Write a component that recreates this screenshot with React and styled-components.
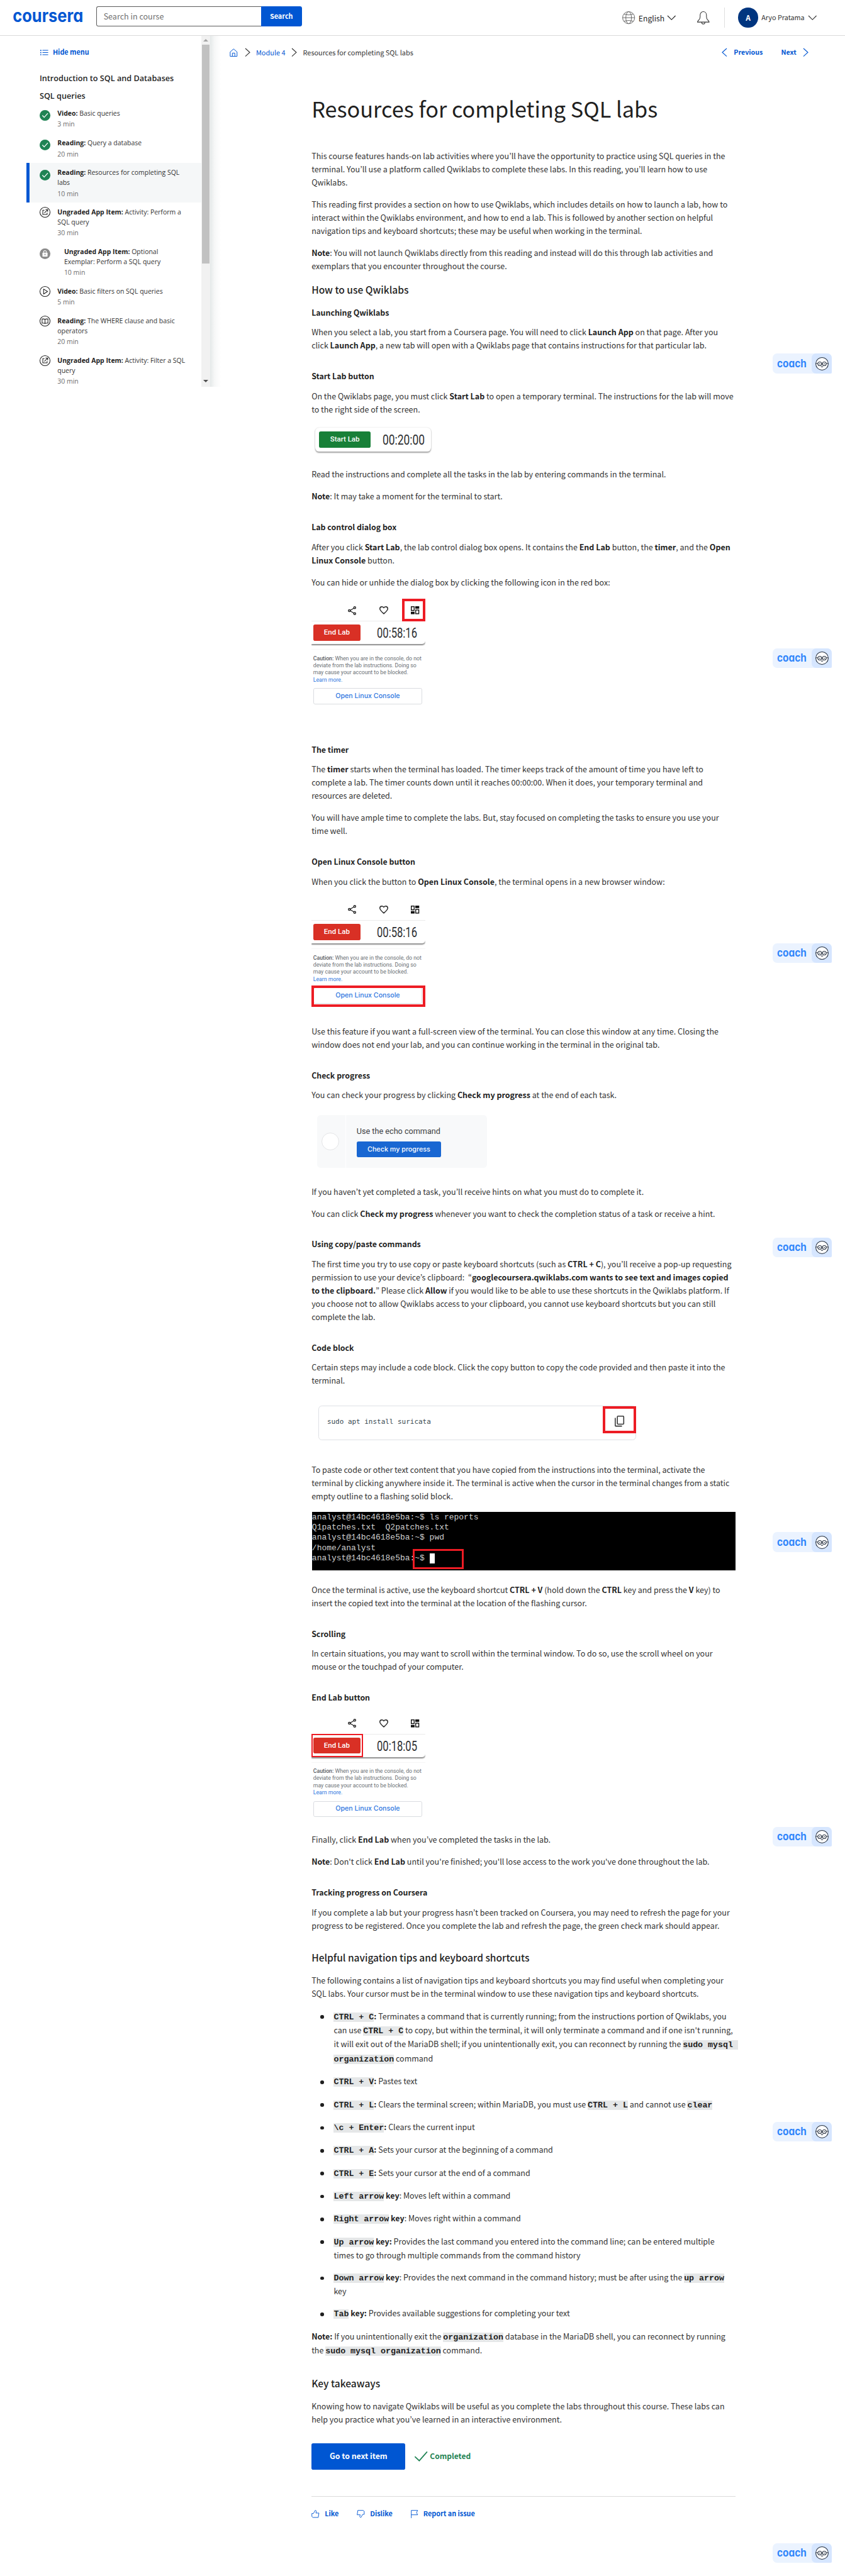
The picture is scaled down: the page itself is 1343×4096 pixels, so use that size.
import React from 'react';
import styled, { createGlobalStyle, css } from 'styled-components';

/* Design units to screen pixels. */
const SCALE = 0.6994;
const u = (n) => `${+(n * SCALE).toFixed(3)}px`;

const SANS = '"Noto Sans CJK KR", "Noto Sans CJK SC", "Open Sans", sans-serif';
const OPEN = '"Open Sans", "Noto Sans", sans-serif';
const MONO = '"Liberation Mono", monospace';
const BLUE = '#0056d2';
const INK = '#1f1f1f';
const BODY_INK = '#333';
const RED = '#ed1c24';

const GlobalStyle = createGlobalStyle`
  *, *::before, *::after { box-sizing: border-box; }
  body { margin: 0; background: #fff; color: ${INK}; font-family: ${SANS}; }
  svg { display: block; flex: none; overflow: visible; }
`;

const Page = styled.div`
  position: relative;
  height: 4096px;
  overflow: hidden;
  white-space: nowrap;
`;

/* ---------- header ---------- */
const Header = styled.header`
  display: flex;
  align-items: center;
  height: ${u(81)};
  padding: 0 ${u(65)} 0 ${u(30)};
  border-bottom: 1px solid #dadada;
`;
const Logo = styled.div`
  width: ${u(189)};
`;
const SearchForm = styled.div`
  display: flex;
  width: ${u(467)};
  height: ${u(46)};
  margin-top: ${u(-5)};
`;
const SearchField = styled.div`
  flex: 1;
  display: flex;
  align-items: center;
  padding: 0 ${u(15)} ${u(1)};
  border: 1px solid #5b5b5b;
  border-right: 0;
  border-radius: ${u(5)} 0 0 ${u(5)};
  color: #707070;
  font-size: ${u(17.96)};
`;
const SearchButton = styled.div`
  display: flex;
  align-items: center;
  justify-content: center;
  width: ${u(93)};
  padding-bottom: ${u(3)};
  border-radius: 0 ${u(5)} ${u(5)} 0;
  background: ${BLUE};
  color: #fff;
  font-size: ${u(15.56)};
  font-weight: 700;
`;
const HeaderTools = styled.div`
  display: flex;
  align-items: center;
  margin-left: auto;
  height: 100%;
`;
const Language = styled.div`
  display: flex;
  align-items: center;
  gap: ${u(7.5)};
  margin: ${u(2)} ${u(49)} 0 0;
  font-size: ${u(17.4)};
  font-weight: 400;
`;
const Bell = styled.div`
  margin-top: ${u(3)};
`;
const Rule = styled.div`
  width: ${u(2)};
  height: ${u(45)};
  margin: 0 ${u(30)} 0 ${u(33)};
  background: #dedede;
`;
const Account = styled.div`
  display: flex;
  align-items: center;
  font-size: ${u(15.5)};
  color: ${BODY_INK};
  > svg { margin-top: ${u(2)}; }
`;
const AccountName = styled.span`
  margin: 0 ${u(9)} ${u(2.5)} ${u(8)};
`;
const Avatar = styled.div`
  display: flex;
  align-items: center;
  justify-content: center;
  width: ${u(45)};
  height: ${u(45)};
  border-radius: 50%;
  background: #00357f;
  color: #fff;
  font-size: ${u(17)};
  font-weight: 700;
`;

/* ---------- body frame ---------- */
const Body = styled.div`
  display: flex;
  align-items: flex-start;
`;
const Sidebar = styled.aside`
  display: flex;
  flex: none;
  width: ${u(502)};
  height: ${u(798)};
  padding-left: ${u(60)};
  overflow: hidden;
`;
const SideContent = styled.div`
  flex: none;
  width: ${u(397)};
`;
const ScrollTrack = styled.div`
  display: flex;
  flex-direction: column;
  align-items: center;
  flex: none;
  width: ${u(21)};
  padding: ${u(8)} 0 ${u(9)};
  background: #f1f1f1;
`;
const ScrollThumb = styled.div`
  width: ${u(17)};
  height: ${u(497)};
  margin: ${u(7)} 0 auto;
  background: #c1c1c1;
`;
const Arrow = styled.div`
  border: ${u(5.8)} solid transparent;
  ${(p) => (p.$down
    ? css`border-top-color: #505050; border-bottom: 0;`
    : css`border-bottom-color: #a3a3a3; border-top: 0;`)}
`;
const Shade = styled.div`
  flex: 1;
  background: linear-gradient(to right, #e4e8e8, #f6f7f7 40%, #fff);
`;
const HideMenu = styled.div`
  display: flex;
  align-items: center;
  gap: ${u(11)};
  height: ${u(30)};
  margin: ${u(22)} 0 0 ${u(31)};
  color: ${BLUE};
  font-size: ${u(15.5)};
  font-weight: 700;
  > svg { margin-top: ${u(3)}; }
  > span { margin-top: ${u(-2.5)}; }
`;
const SideHeading = styled.div`
  margin: ${(p) => u(p.$top)} 0 0 ${u(30)};
  font: 600 ${u(18.12)} / ${u(30)} ${OPEN};
`;
const ItemList = styled.div`
  margin-top: ${u(1.8)};
`;
const Item = styled.div`
  display: flex;
  align-items: flex-start;
  padding: ${u(10)} 0 ${u(10)} ${u(30.3)};
  ${(p) => p.$active && css`
    background: #f5f7f8;
    box-shadow: inset ${u(7)} 0 0 ${BLUE};
  `}
`;
const ItemIcon = styled.div`
  margin: ${(p) => u(p.$drop ? 5.7 : 1.2)} ${(p) => u(p.$indent ? 31 : 15.8)} 0 0;
`;
const ItemText = styled.div`
  margin: ${u(2.4)} 0 ${u(-2.4)};
  font: 400 ${u(14.97)} / ${u(22.5)} ${OPEN};
  color: ${BODY_INK};
  b { font-weight: 700; color: ${INK}; }
`;
const Minutes = styled.div`
  margin-top: ${u(2.5)};
  color: #6e6e6e;
`;

/* ---------- main column ---------- */
const Main = styled.main`
  flex: 1;
`;
const NavRow = styled.nav`
  display: flex;
  align-items: center;
  height: ${u(30)};
  margin: ${u(22)} ${u(84)} 0 ${u(20)};
  font-size: ${u(15.64)};
  svg { margin-top: ${u(2)}; }
`;
const HomeLink = styled.div`
  margin-right: ${u(18)};
`;
const CrumbLink = styled.span`
  margin: 0 ${u(15)} 0 ${u(14)};
  color: ${BLUE};
`;
const CrumbHere = styled.span`
  margin-left: ${u(15)};
  color: ${BODY_INK};
`;
const Pager = styled.div`
  display: flex;
  align-items: center;
  gap: ${u(16.5)};
  margin-left: auto;
  color: ${BLUE};
  font-size: ${u(15.33)};
  font-weight: 700;
`;
const PagerNext = styled.span`
  margin-left: ${u(25)};
`;
const Article = styled.article`
  display: flex;
  flex-direction: column;
  align-items: stretch;
  width: ${u(964)};
  margin: ${u(83.5)} 0 0 ${u(206)};
  font-size: ${u(17.9)};
`;
const Title = styled.h1`
  margin: 0;
  font-size: ${u(49)};
  font-weight: 400;
  line-height: ${u(61)};
`;
const H3 = styled.h3`
  margin: ${(p) => u(p.$top)} 0 0;
  font-size: ${u(22.2)};
  font-weight: 500;
  line-height: ${u(30)};
`;
const H4 = styled.h4`
  margin: ${(p) => u(p.$top ?? 40)} 0 0;
  font-size: ${u(17.7)};
  font-weight: 700;
  line-height: ${u(30)};
`;
const P = styled.p`
  margin: ${(p) => u(p.$top ?? 20)} 0 0;
  line-height: ${(p) => u(p.$line ?? 30)};
  color: ${BODY_INK};
  b { color: ${INK}; }
  ${H4} + & { margin-top: ${u(15)}; }
`;
const Code = styled.code`
  background: #e5e7e8;
  color: ${INK};
  font: 700 ${u(19.02)} / 1 ${MONO};
`;
const List = styled.ul`
  margin: ${u(19)} 0 0;
  padding: 0;
  list-style: none;
`;
const Li = styled.li`
  display: flex;
  align-items: flex-start;
  margin-top: ${(p) => u(p.$top ?? 20)};
  line-height: ${u(32)};
  color: ${BODY_INK};
  b { color: ${INK}; }
  &::before {
    content: '';
    flex: none;
    width: ${u(8)};
    height: ${u(8)};
    margin: ${u(14)} ${u(22.5)} 0 ${u(20)};
    border-radius: 50%;
    background: ${INK};
  }
  &:first-child { margin-top: 0; }
`;

/* ---------- illustrations ---------- */
const StartCard = styled.div`
  display: flex;
  align-items: center;
  justify-content: space-between;
  width: ${u(263)};
  height: ${u(54)};
  margin: ${u(26)} 0 0 ${u(9)};
  padding: 0 ${u(15)} 0 ${u(8.5)};
  border-radius: ${u(9)};
  box-shadow: 0 ${u(2.5)} ${u(3)} rgba(0, 0, 0, 0.35), 0 0 ${u(3)} rgba(0, 0, 0, 0.1);
`;
const LabButton = styled.div`
  display: flex;
  align-items: center;
  justify-content: center;
  width: ${(p) => u(p.$width)};
  height: ${u(37)};
  border-radius: ${u(4)};
  background: ${(p) => p.$color};
  color: #fff;
  font: 500 ${u(16.4)} / 1 Roboto, sans-serif;
`;
const Panel = styled.div`
  position: relative;
  width: ${u(259)};
  height: ${u(258)};
  margin-top: ${(p) => u(p.$top)};
  overflow: hidden;
`;
const PanelIcons = styled.div`
  display: flex;
  align-items: center;
  justify-content: flex-end;
  gap: ${u(52.5)};
  height: ${u(51.5)};
  padding: ${u(2.5)} ${u(14)} 0 0;
  border-bottom: 1px solid #efefef;
`;
const PanelTimer = styled.div`
  display: flex;
  align-items: center;
  justify-content: space-between;
  height: ${u(51.5)};
  padding: 0 ${u(19.5)} 0 ${u(3.7)};
  border-radius: 0 0 ${u(7)} 0;
  box-shadow: 0 ${u(2)} ${u(2.5)} rgba(0, 0, 0, 0.45);
`;
const Caution = styled.div`
  margin-top: ${u(11.5)};
  padding: ${u(12)} 0 0 ${u(3.7)};
  border-top: 1px solid #f6f6f6;
  color: #6a6f74;
  font: 400 ${u(12.5)} / ${u(16.2)} Roboto, sans-serif;
  b { font-weight: 500; color: #55595e; }
`;
const LearnMore = styled.div`
  color: #2b76e0;
`;
const ConsoleButton = styled.div`
  display: flex;
  align-items: center;
  justify-content: center;
  width: ${u(248)};
  height: ${u(36.5)};
  margin: ${u(10.5)} 0 0 ${u(3.7)};
  border: 1px solid #dadce0;
  border-radius: ${u(4)};
  color: #2e77e0;
  font: 500 ${u(15.25)} / 1 Inter, sans-serif;
`;
const Mark = styled.div`
  position: absolute;
  left: ${(p) => u(p.$x)};
  top: ${(p) => u(p.$y)};
  width: ${(p) => u(p.$w)};
  height: ${(p) => u(p.$h)};
  border: ${(p) => u(p.$line ?? 6)} solid ${RED};
`;
const ProgressCard = styled.div`
  display: flex;
  width: ${u(385)};
  height: ${u(120.7)};
  margin: ${u(29)} 0 0 ${u(13)};
  border-radius: ${u(8)};
  background: #f8f9fa;
`;
const ProgressMark = styled.div`
  display: flex;
  align-items: center;
  justify-content: center;
  width: ${u(65)};
  padding-right: ${u(4)};
  border-right: 1px solid #fff;
`;
const Circle = styled.div`
  width: ${u(40)};
  height: ${u(40)};
  border: 1px solid #e4e5e7;
  border-radius: 50%;
  background: #fff;
`;
const ProgressBody = styled.div`
  padding: ${u(27)} 0 0 ${u(24.5)};
  color: #3c4043;
  font: 400 ${u(18.1)} / ${u(24)} Roboto, sans-serif;
`;
const ProgressButton = styled.div`
  width: ${u(192)};
  height: ${u(36.5)};
  margin-top: ${u(9.5)};
  border-radius: ${u(4)};
  background: #1967d2;
  color: #fff;
  text-align: center;
  font: 500 ${u(15.4)} / ${u(36)} Inter, sans-serif;
`;
const CodeBox = styled.div`
  position: relative;
  display: flex;
  align-items: center;
  justify-content: space-between;
  width: ${u(721)};
  height: ${u(79)};
  margin: ${u(40.5)} 0 0 ${u(16)};
  padding: 0 ${u(25)} ${u(1)} ${u(18)};
  border: 1px solid #dfe1e5;
  border-radius: ${u(8)};
  color: #37474f;
  font: 400 ${u(15.68)} / 1 "DejaVu Sans Mono", monospace;
`;
const CopyIconSlot = styled.div`
  margin-bottom: ${u(7)};
`;
const Terminal = styled.pre`
  position: relative;
  height: ${u(133)};
  margin: ${u(19.5)} 0 0 ${u(1)};
  padding: ${u(1.5)} 0 0;
  background: #000;
  color: #cfcfcf;
  font: 400 ${u(18.55)} / ${u(23.3)} ${MONO};
`;
const Cursor = styled.span`
  display: inline-block;
  width: ${u(12)};
  height: ${u(23)};
  background: #fff;
  vertical-align: middle;
`;

/* ---------- footer of the article ---------- */
const Actions = styled.div`
  display: flex;
  align-items: center;
  margin-top: ${u(39)};
`;
const NextButton = styled.div`
  width: ${u(213.5)};
  height: ${u(60)};
  margin-right: ${u(20.5)};
  border-radius: ${u(4)};
  background: ${BLUE};
  color: #fff;
  text-align: center;
  font-size: ${u(17.6)};
  font-weight: 700;
  line-height: ${u(58)};
`;
const Completed = styled.span`
  margin: 0 0 ${u(5)} ${u(6)};
  color: #1f8354;
  font-size: ${u(17.2)};
  font-weight: 700;
`;
const Feedback = styled.div`
  display: flex;
  gap: ${u(41.5)};
  margin-top: ${u(60)};
  padding-top: ${u(25)};
  border-top: 1px solid #dcdcdc;
  color: ${BLUE};
  font-size: ${u(15.5)};
  font-weight: 700;
  line-height: ${u(30)};
`;
const FeedbackItem = styled.div`
  display: flex;
  align-items: center;
  gap: ${u(12)};
  span { margin-top: ${u(-2)}; }
`;

/* ---------- coach badge ---------- */
const CoachBadge = styled.div`
  position: absolute;
  left: ${u(1756)};
  top: ${(p) => u(p.$y)};
  display: flex;
  align-items: center;
  width: ${u(134)};
  height: ${u(45)};
  padding-left: ${u(10.5)};
  border-radius: ${u(10)} ${u(10)} ${u(3)} ${u(10)};
  background: #ebf3ff;
`;
const CoachFace = styled.div`
  display: flex;
  align-items: center;
  justify-content: center;
  width: ${u(45)};
  height: 100%;
  margin-left: auto;
  border-radius: ${u(10)} ${u(10)} ${u(3)} ${u(10)};
  background: #d6e6ff;
`;
const Wordmark = styled.text`
  font-family: Inter, sans-serif;
  font-weight: ${(p) => p.$weight ?? 700};
  font-feature-settings: 'cv11';
`;
const TimerText = styled.text`
  font-family: Roboto, sans-serif;
  font-weight: 400;
`;

function Svg({ w, h, stroke = 'currentColor', sw = 1.5, fill = 'none', children }) {
  return (
    <svg width={w * SCALE} height={h * SCALE} viewBox={`0 0 ${w} ${h}`} fill={fill} stroke={stroke} strokeWidth={sw}>
      {children}
    </svg>
  );
}

const Chevron = ({ dir, w = 10, h = 18, sw = 1.6, color }) => (
  <Svg w={w} h={h} sw={sw} stroke={color}>
    {dir === 'down' && <path d={`M0 0 L${w / 2} ${h} L${w} 0`} />}
    {dir === 'right' && <path d={`M0 0 L${w} ${h / 2} L0 ${h}`} />}
    {dir === 'left' && <path d={`M${w} 0 L0 ${h / 2} L${w} ${h}`} />}
  </Svg>
);

const Timer = ({ value, width = 91.5 }) => (
  <Svg w={width} h={23} stroke="none" fill="#2b2d30">
    <TimerText x="0" y="22.5" fontSize="31" textLength={width} lengthAdjust="spacingAndGlyphs">{value}</TimerText>
  </Svg>
);

const DoneIcon = () => (
  <Svg w={24.4} h={24.4} sw={1.8} stroke="#fff">
    <circle cx="12.2" cy="12.2" r="12.2" fill="#1f8354" stroke="none" />
    <path d="M6.3 12.2 L10.3 16.6 L18.6 7.4" />
  </Svg>
);
const RingIcon = ({ children }) => (
  <Svg w={24.4} h={24.4} sw={1.5} stroke={INK}>
    <circle cx="12.2" cy="12.2" r="11.5" />
    {children}
  </Svg>
);
const icons = {
  done: <DoneIcon />,
  app: (
    <RingIcon>
      <path d="M11 7.4H7.2V17.2H17V13.4M13.3 6.2H18.2V11.1M18.2 6.2L10.8 13.6" />
    </RingIcon>
  ),
  video: (
    <RingIcon>
      <path d="M9 6.6L18 12.2L9 17.8Z" strokeLinejoin="round" />
    </RingIcon>
  ),
  reading: (
    <RingIcon>
      <path d="M12.2 8.3C11 7.4 8.5 7.2 5.6 7.4V16.8C8.5 16.6 11 16.8 12.2 17.8C13.4 16.8 15.9 16.6 18.8 16.8V7.4C15.9 7.2 13.4 7.4 12.2 8.3V17.6" />
    </RingIcon>
  ),
  lock: (
    <Svg w={24.4} h={24.4} stroke="none">
      <circle cx="12.2" cy="12.2" r="12.2" fill="#8c8c8c" />
      <rect x="6.4" y="9.6" width="11.6" height="9" rx="1" fill="#fff" />
      <path d="M9 9.8V8.2A3.2 3.2 0 0 1 15.4 8.2V9.8" stroke="#fff" strokeWidth="1.5" />
      <path d="M12.2 12V16M10.8 13.4H13.6" stroke="#8c8c8c" strokeWidth="1.2" />
    </Svg>
  ),
};

const items = [
  { kind: 'Video', icon: 'done', lines: ['Basic queries'], min: 3 },
  { kind: 'Reading', icon: 'done', lines: ['Query a database'], min: 20 },
  { kind: 'Reading', icon: 'done', lines: ['Resources for completing SQL', 'labs'], min: 10, active: true },
  { kind: 'Ungraded App Item', icon: 'app', lines: ['Activity: Perform a', 'SQL query'], min: 30 },
  { kind: 'Ungraded App Item', icon: 'lock', lines: ['Optional', 'Exemplar: Perform a SQL query'], min: 10, indent: true },
  { kind: 'Video', icon: 'video', lines: ['Basic filters on SQL queries'], min: 5 },
  { kind: 'Reading', icon: 'reading', lines: ['The WHERE clause and basic', 'operators'], min: 20 },
  { kind: 'Ungraded App Item', icon: 'app', lines: ['Activity: Filter a SQL', 'query'], min: 30 },
];

function SideItem({ item }) {
  return (
    <Item $active={item.active}>
      <ItemIcon $drop={item.icon === 'done' || item.icon === 'lock'} $indent={item.indent}>{icons[item.icon]}</ItemIcon>
      <ItemText>
        <div><b>{item.kind}:</b> {item.lines[0]}</div>
        {item.lines[1] && <div>{item.lines[1]}</div>}
        <Minutes>{item.min} min</Minutes>
      </ItemText>
    </Item>
  );
}

function LabPanel({ top, time, mark }) {
  return (
    <Panel $top={top}>
      <PanelIcons>
        <Svg w={18.5} h={20} sw={2} stroke="#222">
          <path d="M4 10L15.5 3.2M4 10L15.5 16.8" />
          <circle cx="15.4" cy="3.2" r="2.2" fill="#fff" />
          <circle cx="3.2" cy="10" r="2.2" fill="#fff" />
          <circle cx="15.4" cy="16.8" r="2.2" fill="#fff" />
        </Svg>
        <Svg w={20} h={18} sw={2} stroke="#222">
          <path d="M10 17C4.5 12 1 9 1 5.6C1 3 3 1 5.5 1C7.3 1 9 2 10 3.4C11 2 12.7 1 14.5 1C17 1 19 3 19 5.6C19 9 15.5 12 10 17Z" />
        </Svg>
        <Svg w={19} h={18} sw={2} stroke="#111">
          <rect x="1" y="1" width="6.5" height="8.5" />
          <rect x="11" y="1" width="7" height="3.5" fill="#111" />
          <rect x="1" y="13.5" width="6.5" height="3.5" fill="#111" />
          <rect x="11" y="8.5" width="7" height="8.5" />
        </Svg>
      </PanelIcons>
      <PanelTimer>
        <LabButton $width={107.6} $color="#d93025">End Lab</LabButton>
        <Timer value={time} />
      </PanelTimer>
      <Caution>
        <b>Caution:</b> When you are in the console, do not<br />
        deviate from the lab instructions. Doing so<br />
        may cause your account to be blocked.
        <LearnMore>Learn more.</LearnMore>
      </Caution>
      <ConsoleButton>Open Linux Console</ConsoleButton>
      {mark === 'grid' && <Mark $x={206} $y={0} $w={53} $h={51} />}
      {mark === 'console' && <Mark $x={0} $y={198} $w={258.5} $h={49} />}
      {mark === 'end' && <Mark $x={0} $y={50} $w={117} $h={53} $line={3} />}
    </Panel>
  );
}

const Coach = ({ y }) => (
  <CoachBadge $y={y}>
    <Svg w={67} h={18} stroke="none" fill="#3186fb">
      <Wordmark $weight={650} x="0" y="16.5" fontSize="24" textLength="67" lengthAdjust="spacingAndGlyphs">coach</Wordmark>
    </Svg>
    <CoachFace>
      <Svg w={30} h={30} sw={1.5} stroke="#26303f">
        <circle cx="15" cy="15" r="14.2" fill="#fff" />
        <circle cx="9.8" cy="15" r="4.3" />
        <circle cx="20.2" cy="15" r="4.3" />
        <path d="M14.1 14.6H15.9M1 13.8L5.5 14.4M29 13.8L24.5 14.4M12.6 20.8Q15 22.8 17.4 20.8" />
        <circle cx="9.8" cy="15" r="1.2" fill="#26303f" stroke="none" />
        <circle cx="20.2" cy="15" r="1.2" fill="#26303f" stroke="none" />
      </Svg>
    </CoachFace>
  </CoachBadge>
);
const coachTops = [804, 1474, 2144, 2813.5, 3483.5, 4153.5, 4823.5, 5782];

export default function App() {
  return (
    <Page>
      <GlobalStyle />
      <Header>
        <Logo>
          <Svg w={159} h={24} stroke="none" fill={BLUE}>
            <Wordmark x="-1" y="23.5" fontSize="40" textLength="160" lengthAdjust="spacingAndGlyphs">coursera</Wordmark>
          </Svg>
        </Logo>
        <SearchForm>
          <SearchField>Search in course</SearchField>
          <SearchButton>Search</SearchButton>
        </SearchForm>
        <HeaderTools>
          <Language>
            <Svg w={29} h={29} sw={1.4} stroke="#666">
              <circle cx="14.5" cy="14.5" r="13.7" />
              <ellipse cx="14.5" cy="14.5" rx="6.4" ry="13.7" />
              <path d="M1 14.5H28M4 6.5Q14.5 10 25 6.5M4 22.5Q14.5 19 25 22.5" />
            </Svg>
            English
            <Chevron dir="down" w={18} h={9} />
          </Language>
          <Bell>
            <Svg w={28} h={30} sw={1.5} stroke="#333">
              <path d="M0.8 24.5C0.8 20 6.8 20.5 6.8 13V8.5C6.8 4 10 0.8 14 0.8C18 0.8 21.2 4 21.2 8.5V13C21.2 20.5 27.2 20 27.2 24.5Z" />
              <path d="M10.3 24.8A3.7 4.3 0 0 0 17.7 24.8" />
            </Svg>
          </Bell>
          <Rule />
          <Account>
            <Avatar>A</Avatar>
            <AccountName>Aryo Pratama</AccountName>
            <Chevron dir="down" w={18} h={9} />
          </Account>
        </HeaderTools>
      </Header>

      <Body>
        <Sidebar>
          <SideContent>
            <HideMenu>
              <Svg w={18} h={13} sw={1.6}>
                <path d="M5 1.5H18M5 6.5H18M5 11.5H18" />
                <path d="M0 1.5H2.4M0 6.5H2.4M0 11.5H2.4" strokeWidth="2.4" />
              </Svg>
              <span>Hide menu</span>
            </HideMenu>
            <SideHeading $top={30.2}>Introduction to SQL and Databases</SideHeading>
            <SideHeading $top={10}>SQL queries</SideHeading>
            <ItemList>
              {items.map((item, i) => <SideItem key={i} item={item} />)}
            </ItemList>
          </SideContent>
          <ScrollTrack>
            <Arrow />
            <ScrollThumb />
            <Arrow $down />
          </ScrollTrack>
          <Shade />
        </Sidebar>

        <Main>
          <NavRow>
            <HomeLink>
              <Svg w={18} h={19} sw={1.4} stroke={BLUE}>
                <path d="M1.2 8L9 1.2L16.8 8V18H1.2ZM6.2 18V10.6H11.8V18" />
              </Svg>
            </HomeLink>
            <Chevron dir="right" color="#333" />
            <CrumbLink>Module 4</CrumbLink>
            <Chevron dir="right" color="#333" />
            <CrumbHere>Resources for completing SQL labs</CrumbHere>
            <Pager>
              <Chevron dir="left" />
              Previous
              <PagerNext>Next</PagerNext>
              <Chevron dir="right" />
            </Pager>
          </NavRow>

          <Article>
            <Title>Resources for completing SQL labs</Title>
            <P $top={63.5}>
              This course features hands-on lab activities where you’ll have the opportunity to practice using SQL queries in the<br />
              terminal. You’ll use a platform called Qwiklabs to complete these labs. In this reading, you’ll learn how to use<br />
              Qwiklabs.
            </P>
            <P>
              This reading first provides a section on how to use Qwiklabs, which includes details on how to launch a lab, how to<br />
              interact within the Qwiklabs environment, and how to end a lab. This is followed by another section on helpful<br />
              navigation tips and keyboard shortcuts; these may be useful when working in the terminal.
            </P>
            <P>
              <b>Note</b>: You will not launch Qwiklabs directly from this reading and instead will do this through lab activities and<br />
              exemplars that you encounter throughout the course.
            </P>
            <H3 $top={22}>How to use Qwiklabs</H3>
            <H4 $top={23.3}>Launching Qwiklabs</H4>
            <P>
              When you select a lab, you start from a Coursera page. You will need to click <b>Launch App</b> on that page. After you<br />
              click <b>Launch App</b>, a new tab will open with a Qwiklabs page that contains instructions for that particular lab.
            </P>
            <H4>Start Lab button</H4>
            <P>
              On the Qwiklabs page, you must click <b>Start Lab</b> to open a temporary terminal. The instructions for the lab will move<br />
              to the right side of the screen.
            </P>
            <StartCard>
              <LabButton $width={116.5} $color="#188038">Start Lab</LabButton>
              <Timer value="00:20:00" width={96} />
            </StartCard>
            <P $top={38.3}>Read the instructions and complete all the tasks in the lab by entering commands in the terminal.</P>
            <P><b>Note</b>: It may take a moment for the terminal to start.</P>
            <H4>Lab control dialog box</H4>
            <P>
              After you click <b>Start Lab</b>, the lab control dialog box opens. It contains the <b>End Lab</b> button, the <b>timer</b>, and the <b>Open</b><br />
              <b>Linux Console</b> button.
            </P>
            <P>You can hide or unhide the dialog box by clicking the following icon in the red box:</P>
            <LabPanel top={22} time="00:58:16" mark="grid" />
            <H4 $top={70.5}>The timer</H4>
            <P>
              The <b>timer</b> starts when the terminal has loaded. The timer keeps track of the amount of time you have left to<br />
              complete a lab. The timer counts down until it reaches 00:00:00. When it does, your temporary terminal and<br />
              resources are deleted.
            </P>
            <P>
              You will have ample time to complete the labs. But, stay focused on completing the tasks to ensure you use your<br />
              time well.
            </P>
            <H4>Open Linux Console button</H4>
            <P>When you click the button to <b>Open Linux Console</b>, the terminal opens in a new browser window:</P>
            <LabPanel top={22} time="00:58:16" mark="console" />
            <P $top={30.5}>
              Use this feature if you want a full-screen view of the terminal. You can close this window at any time. Closing the<br />
              window does not end your lab, and you can continue working in the terminal in the original tab.
            </P>
            <H4>Check progress</H4>
            <P>You can check your progress by clicking <b>Check my progress</b> at the end of each task.</P>
            <ProgressCard>
              <ProgressMark><Circle /></ProgressMark>
              <ProgressBody>
                Use the echo command
                <ProgressButton>Check my progress</ProgressButton>
              </ProgressBody>
            </ProgressCard>
            <P $top={39.5}>If you haven’t yet completed a task, you’ll receive hints on what you must do to complete it.</P>
            <P>You can click <b>Check my progress</b> whenever you want to check the completion status of a task or receive a hint.</P>
            <H4>Using copy/paste commands</H4>
            <P>
              The first time you try to use copy or paste keyboard shortcuts (such as <b>CTRL + C</b>), you’ll receive a pop-up requesting<br />
              permission to use your device’s clipboard:&nbsp; “<b>googlecoursera.qwiklabs.com wants to see text and images copied</b><br />
              <b>to the clipboard.</b>” Please click <b>Allow</b> if you would like to be able to use these shortcuts in the Qwiklabs platform. If<br />
              you choose not to allow Qwiklabs access to your clipboard, you cannot use keyboard shortcuts but you can still<br />
              complete the lab.
            </P>
            <H4>Code block</H4>
            <P>
              Certain steps may include a code block. Click the copy button to copy the code provided and then paste it into the<br />
              terminal.
            </P>
            <CodeBox>
              sudo apt install suricata
              <CopyIconSlot>
                <Svg w={22} h={25} sw={2.2} stroke="#333">
                  <rect x="6" y="1.2" width="14.5" height="18" rx="1.5" />
                  <path d="M1.2 5V22.5Q1.2 23.8 2.5 23.8H16.5" />
                </Svg>
              </CopyIconSlot>
              <Mark $x={645} $y={1} $w={75} $h={61} />
            </CodeBox>
            <P $top={53.3}>
              To paste code or other text content that you have copied from the instructions into the terminal, activate the<br />
              terminal by clicking anywhere inside it. The terminal is active when the cursor in the terminal changes from a static<br />
              empty outline to a flashing solid block.
            </P>
            <Terminal>
              {'analyst@14bc4618e5ba:~$ ls reports\nQ1patches.txt  Q2patches.txt\nanalyst@14bc4618e5ba:~$ pwd\n/home/analyst\nanalyst@14bc4618e5ba:~$ '}
              <Cursor />
              <Mark $x={229.5} $y={85} $w={115} $h={45} $line={4.4} />
            </Terminal>
            <P $top={30}>
              Once the terminal is active, use the keyboard shortcut <b>CTRL + V</b> (hold down the <b>CTRL</b> key and press the <b>V</b> key) to<br />
              insert the copied text into the terminal at the location of the flashing cursor.
            </P>
            <H4>Scrolling</H4>
            <P>
              In certain situations, you may want to scroll within the terminal window. To do so, use the scroll wheel on your<br />
              mouse or the touchpad of your computer.
            </P>
            <H4>End Lab button</H4>
            <LabPanel top={16.5} time="00:18:05" mark="end" />
            <P $top={19.3}>Finally, click <b>End Lab</b> when you’ve completed the tasks in the lab.</P>
            <P><b>Note</b>: Don't click <b>End Lab</b> until you're finished; you'll lose access to the work you've done throughout the lab.</P>
            <H4>Tracking progress on Coursera</H4>
            <P>
              If you complete a lab but your progress hasn’t been tracked on Coursera, you may need to refresh the page for your<br />
              progress to be registered. Once you complete the lab and refresh the page, the green check mark should appear.
            </P>
            <H3 $top={42.3}>Helpful navigation tips and keyboard shortcuts</H3>
            <P $top={23}>
              The following contains a list of navigation tips and keyboard shortcuts you may find useful when completing your<br />
              SQL labs. Your cursor must be in the terminal window to use these navigation tips and keyboard shortcuts.
            </P>
            <List>
              <Li>
                <div>
                  <Code>CTRL + C</Code><b>:</b> Terminates a command that is currently running; from the instructions portion of Qwiklabs, you<br />
                  can use <Code>CTRL + C</Code> to copy, but within the terminal, it will only terminate a command and if one isn't running,<br />
                  it will exit out of the MariaDB shell; if you unintentionally exit, you can reconnect by running the <Code>sudo mysql&nbsp;</Code><br />
                  <Code>organization</Code> command
                </div>
              </Li>
              <Li><div><Code>CTRL + V</Code><b>:</b> Pastes text</div></Li>
              <Li><div><Code>CTRL + L</Code><b>:</b> Clears the terminal screen; within MariaDB, you must use <Code>CTRL + L</Code> and cannot use <Code>clear</Code></div></Li>
              <Li><div><Code>\c + Enter</Code><b>:</b> Clears the current input</div></Li>
              <Li><div><Code>CTRL + A</Code><b>:</b> Sets your cursor at the beginning of a command</div></Li>
              <Li><div><Code>CTRL + E</Code><b>:</b> Sets your cursor at the end of a command</div></Li>
              <Li><div><Code>Left arrow</Code> <b>key</b>: Moves left within a command</div></Li>
              <Li><div><Code>Right arrow</Code> <b>key</b>: Moves right within a command</div></Li>
              <Li>
                <div>
                  <Code>Up arrow</Code> <b>key:</b> Provides the last command you entered into the command line; can be entered multiple<br />
                  times to go through multiple commands from the command history
                </div>
              </Li>
              <Li $top={18}>
                <div>
                  <Code>Down arrow</Code> <b>key</b>: Provides the next command in the command history; must be after using the <Code>up arrow</Code><br />
                  key
                </div>
              </Li>
              <Li $top={18}><div><Code>Tab</Code> <b>key:</b> Provides available suggestions for completing your text</div></Li>
            </List>
            <P $line={32}>
              <b>Note:</b> If you unintentionally exit the <Code>organization</Code> database in the MariaDB shell, you can reconnect by running<br />
              the <Code>sudo mysql organization</Code> command.
            </P>
            <H3 $top={43.5}>Key takeaways</H3>
            <P $top={22.6}>
              Knowing how to navigate Qwiklabs will be useful as you complete the labs throughout this course. These labs can<br />
              help you practice what you’ve learned in an interactive environment.
            </P>
            <Actions>
              <NextButton>Go to next item</NextButton>
              <Svg w={29} h={22} sw={2.4} stroke="#1f8354">
                <path d="M0.5 11.5L10.5 21L28.5 0.5" />
              </Svg>
              <Completed>Completed</Completed>
            </Actions>
            <Feedback>
              <FeedbackItem>
                <Svg w={18} h={18} sw={1.3}>
                  <path d="M1 8H4.5L8.5 1C10.5 1 11.5 2.2 11 4L10 7H17L15.5 17H3.5L1 15Z" strokeLinejoin="round" />
                </Svg>
                <span>Like</span>
              </FeedbackItem>
              <FeedbackItem>
                <Svg w={18} h={18} sw={1.3}>
                  <path d="M17 10H13.5L9.5 17C7.5 17 6.5 15.8 7 14L8 11H1L2.5 1H14.5L17 3Z" strokeLinejoin="round" />
                </Svg>
                <span>Dislike</span>
              </FeedbackItem>
              <FeedbackItem>
                <Svg w={16.5} h={18} sw={1.3}>
                  <path d="M1 18.5V1H15.5L12.8 6L15.5 11H1" />
                </Svg>
                <span>Report an issue</span>
              </FeedbackItem>
            </Feedback>
          </Article>
        </Main>
      </Body>
      {coachTops.map((y) => <Coach key={y} y={y} />)}
    </Page>
  );
}
